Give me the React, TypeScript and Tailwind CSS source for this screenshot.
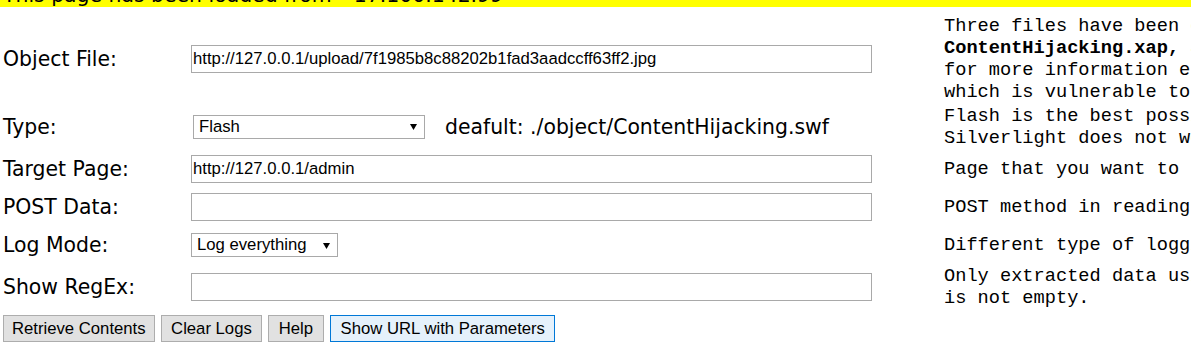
import React from "react";

const labelFont = "font-['DejaVu_Sans',sans-serif] text-[20.4px] text-black";
const fieldFont = "font-['Liberation_Sans',Arial,sans-serif] text-[16.7px] text-black";
const monoFont = "font-['Liberation_Mono','Courier_New',monospace] text-[18.67px] leading-[22px] text-black";

function Field({ value }: { value?: string }) {
  return (
    <input
      readOnly
      value={value ?? ""}
      className={`h-[28px] w-[681px] border border-[#a9a9a9] bg-white px-[1px] outline-none ${fieldFont}`}
    />
  );
}

function Select({ value, width, className = "" }: { value: string; width: string; className?: string }) {
  return (
    <div
      className={`flex h-[24px] items-center justify-between border border-[#a9a9a9] bg-white pl-[5px] pr-[7px] ${width} ${className} ${fieldFont}`}
    >
      <span className="leading-none">{value}</span>
      <svg width="7" height="6" viewBox="0 0 7 6" className="mt-[1px]">
        <path d="M0 0H7L3.5 6Z" fill="#000" />
      </svg>
    </div>
  );
}

function Desc({ lines }: { lines: React.ReactNode[] }) {
  return (
    <div className={`whitespace-nowrap ${monoFont}`}>
      {lines.map((l, i) => (
        <div key={i}>{l}</div>
      ))}
    </div>
  );
}

const btn = "h-[27px] border border-[#adadad] bg-[#e1e1e1]";

export default function App() {
  return (
    <div className="h-[350px] w-[1191px] overflow-hidden bg-white">
      <div className="h-[7px] overflow-hidden bg-[#ffff00]">
        <p className={`-mt-[16px] whitespace-pre pl-[3px] leading-[22px] ${labelFont}`}>
          {'This page has been loaded from  "17.100.142.99 "'}
        </p>
      </div>

      <div className="mt-[7px] grid grid-cols-[188px_753px_max-content] grid-rows-[90px_46px_38px_38px_38px_46px] items-center pl-[3px]">
        <span className={labelFont}>Object File:</span>
        <Field value="http://127.0.0.1/upload/7f1985b8c88202b1fad3aadccff63ff2.jpg" />
        <Desc
          lines={[
            "Three files have been created: ContentHijacking.swf,",
            <>
              <b>ContentHijacking.xap,</b> and ContentHijacking.pdf. Please see the readme
            </>,
            "for more information e.g. how to upload them on a target website",
            "which is vulnerable to content hijacking.",
          ]}
        />

        <span className={labelFont}>Type:</span>
        <div className="flex items-center">
          <Select value="Flash" width="w-[232px]" className="ml-[2px]" />
          <span className={`ml-[20px] ${labelFont}`}>deafult: ./object/ContentHijacking.swf</span>
        </div>
        <Desc
          lines={[
            "Flash is the best possible option as it works in most browsers.",
            "Silverlight does not work in all browsers.",
          ]}
        />

        <span className={labelFont}>Target Page:</span>
        <Field value="http://127.0.0.1/admin" />
        <Desc lines={["Page that you want to read its content."]} />

        <span className={labelFont}>POST Data:</span>
        <Field />
        <Desc lines={["POST method in reading the target page will be used when this is not empty."]} />

        <span className={labelFont}>Log Mode:</span>
        <div>
          <Select value="Log everything" width="w-[147px]" />
        </div>
        <Desc lines={["Different type of logging can be selected here."]} />

        <span className={labelFont}>Show RegEx:</span>
        <Field />
        <Desc
          lines={[
            "Only extracted data using this regular expression will be shown when it",
            "is not empty.",
          ]}
        />
      </div>

      <div className={`mt-[5px] flex gap-[6.5px] pl-[3px] ${fieldFont}`}>
        <button className={`${btn} px-[8px]`}>Retrieve Contents</button>
        <button className={`${btn} px-[9px]`}>Clear Logs</button>
        <button className={`${btn} px-[9.5px]`}>Help</button>
        <button className="h-[27px] border border-[#0078d7] bg-[#e5f1fb] px-[9.5px]">Show URL with Parameters</button>
      </div>
    </div>
  );
}
